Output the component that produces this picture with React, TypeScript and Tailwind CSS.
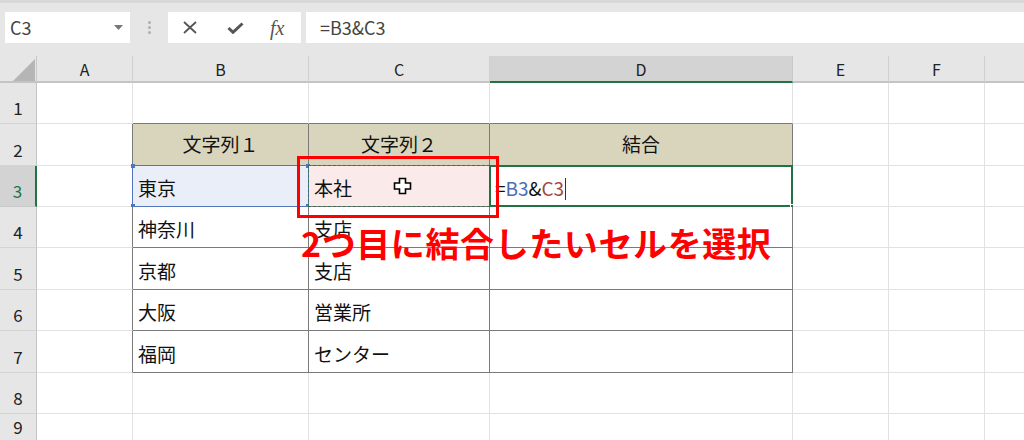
import React from 'react';

const font = { fontFamily: '"Noto Sans CJK JP", "Noto Sans", sans-serif' };

const cols = ['A', 'B', 'C', 'D', 'E', 'F', 'G'];
const rows = [1, 2, 3, 4, 5, 6, 7, 8, 9];

const data: Record<string, string> = {
  B2: '文字列１',
  C2: '文字列２',
  D2: '結合',
  B3: '東京',
  C3: '本社',
  B4: '神奈川',
  C4: '支店',
  B5: '京都',
  C5: '支店',
  B6: '大阪',
  C6: '営業所',
  B7: '福岡',
  C7: 'センター',
};

const Cell = ({ r, ci }: { r: number; ci: number }) => {
  const col = cols[ci - 1];
  const key = col + r;
  const darkR = ci >= 1 && ci <= 4 && r >= 2 && r <= 7;
  const darkB = ci >= 2 && ci <= 4 && r >= 1 && r <= 7;
  const isHead = r === 2 && ci >= 2 && ci <= 4;
  let bg = 'bg-white';
  if (isHead) bg = 'bg-[#d9d5bd]';
  if (key === 'B3') bg = 'bg-[#e9eef8]';
  if (key === 'C3') bg = 'bg-[#fbeaea]';

  return (
    <div
      className={`relative flex border-r border-b ${darkR ? 'border-r-[#7a7a7a]' : 'border-r-[#e2e2e2]'} ${
        darkB ? 'border-b-[#7a7a7a]' : 'border-b-[#e2e2e2]'
      } ${bg} ${isHead ? 'items-center justify-center' : 'items-center pl-[5px] pt-[5px]'} text-[19px] text-[#111]`}
    >
      {key === 'D3' ? (
        <span className="flex items-center">
          <span>=</span>
          <span className="text-[#4a6db3]">B3</span>
          <span>&amp;</span>
          <span className="text-[#a1483e]">C3</span>
          <span className="ml-[1px] inline-block h-[22px] w-px bg-[#333]" />
        </span>
      ) : (
        data[key] && <span>{data[key]}</span>
      )}

      {key === 'B3' && (
        <div className="pointer-events-none absolute -top-px -left-px -right-px -bottom-px border border-[#5176bd]">
          <div className="absolute -top-[2px] -left-[2px] h-[4px] w-[4px] bg-[#5176bd]" />
          <div className="absolute -bottom-[2px] -left-[2px] h-[4px] w-[4px] bg-[#5176bd]" />
          <div className="absolute -top-[2px] -right-[2px] h-[4px] w-[4px] bg-[#5176bd]" />
          <div className="absolute -bottom-[2px] -right-[2px] h-[4px] w-[4px] bg-[#5176bd]" />
        </div>
      )}
      {key === 'C3' && (
        <div className="pointer-events-none absolute -top-px -left-px -right-px -bottom-px border border-dashed border-[#3d6e50]" />
      )}
      {key === 'D3' && (
        <div className="pointer-events-none absolute -top-px -left-px -right-px -bottom-px border-2 border-[#217346]">
          <div className="absolute -bottom-[4px] -right-[4px] h-[5px] w-[5px] border border-white bg-[#217346]" />
        </div>
      )}
    </div>
  );
};

export default function App() {
  return (
    <div className="relative h-[440px] w-[1024px] overflow-hidden bg-white" style={font}>
      {/* formula bar */}
      <div className="flex h-[56px] items-start border-t-[3px] border-[#d8d8d8] bg-[#e6e6e6] pt-[9px]">
        <div className="ml-[5px] flex h-[31px] w-[125px] items-center justify-between bg-white pl-[5px] pr-[7px] text-[18px] text-[#444]">
          <span>C3</span>
          <svg width="9" height="5" viewBox="0 0 9 5">
            <polygon points="0,0 9,0 4.5,5" fill="#777" />
          </svg>
        </div>
        <div className="flex h-[31px] w-[38px] flex-col items-center justify-center gap-[2px]">
          <span className="h-[3px] w-[3px] rounded-full bg-[#b0b0b0]" />
          <span className="h-[3px] w-[3px] rounded-full bg-[#b0b0b0]" />
          <span className="h-[3px] w-[3px] rounded-full bg-[#b0b0b0]" />
        </div>
        <div className="flex h-[31px] w-[133px] items-center bg-white">
          <svg className="ml-[15px]" width="14" height="13" viewBox="0 0 14 13">
            <path d="M1 1 L13 12 M13 1 L1 12" stroke="#555" strokeWidth="1.8" />
          </svg>
          <svg className="ml-[30px]" width="17" height="12" viewBox="0 0 17 12">
            <path d="M1.5 6 L6 10.3 L15.5 1.5" stroke="#555" strokeWidth="3" fill="none" />
          </svg>
          <span
            className="ml-[26px] text-[20px] italic text-[#555]"
            style={{ fontFamily: '"Liberation Serif", serif' }}
          >
            fx
          </span>
        </div>
        <div className="ml-[5px] flex h-[31px] flex-1 items-center bg-white pl-[14px] text-[18px] text-[#444]">
          =B3&amp;C3
        </div>
      </div>

      {/* sheet grid */}
      <div className="grid h-[384px] w-[1081px] grid-cols-[37px_96px_176px_181px_303px_96px_96px_96px] grid-rows-[27px_41px_42px_41px_41px_42px_41px_42px_41px_1fr]">
        {/* corner */}
        <div className="relative border-r border-b-2 border-r-[#c8c8c8] border-b-[#c4c4c4] bg-[#e6e6e6]">
          <svg className="absolute left-0 top-0" width="37" height="27" viewBox="0 0 37 27">
            <polygon points="13,25 35,25 35,3" fill="#b5b5b5" />
          </svg>
        </div>
        {cols.map((c) =>
          c === 'D' ? (
            <div
              key={c}
              className="flex items-center justify-center border-r border-b-2 border-r-[#c8c8c8] border-b-[#217346] bg-[#d3d3d3] text-[16px] text-[#222]"
            >
              {c}
            </div>
          ) : (
            <div
              key={c}
              className="flex items-center justify-center border-r border-b-2 border-r-[#d0d0d0] border-b-[#c4c4c4] bg-[#e6e6e6] text-[16px] text-[#222]"
            >
              {c === 'G' ? '' : c}
            </div>
          )
        )}

        {rows.map((r) => (
          <React.Fragment key={r}>
            {r === 3 ? (
              <div className="flex items-end justify-center border-r-2 border-b border-r-[#217346] border-b-[#c8c8c8] bg-[#d3d3d3] pb-[3px] text-[17px] text-[#217346]">
                {r}
              </div>
            ) : (
              <div className="flex items-end justify-center border-r border-b border-r-[#c4c4c4] border-b-[#d4d4d4] bg-[#e6e6e6] pb-[3px] text-[17px] text-[#222]">
                {r}
              </div>
            )}
            {cols.map((c, i) => (
              <Cell key={c} r={r} ci={i + 1} />
            ))}
          </React.Fragment>
        ))}
        <div className="border-r border-r-[#c4c4c4] bg-[#e6e6e6]" />
      </div>

      {/* selection cursor */}
      <svg className="absolute left-[393px] top-[177px]" width="19" height="18" viewBox="0 0 19 18">
        <path
          d="M6.5 1.5 H12.5 V6 H17.5 V12 H12.5 V16.5 H6.5 V12 H1.5 V6 H6.5 Z"
          fill="#fff"
          stroke="#000"
          strokeWidth="1.6"
        />
      </svg>

      {/* annotation */}
      <div className="pointer-events-none absolute left-[297px] top-[156px] h-[62px] w-[202px] border-[3px] border-[#ff0000]" />
      <div className="pointer-events-none absolute left-[301px] top-[226px] whitespace-nowrap text-[34px] font-bold leading-none tracking-[0.6px] text-[#ff0000]">
        2つ目に結合したいセルを選択
      </div>
    </div>
  );
}
